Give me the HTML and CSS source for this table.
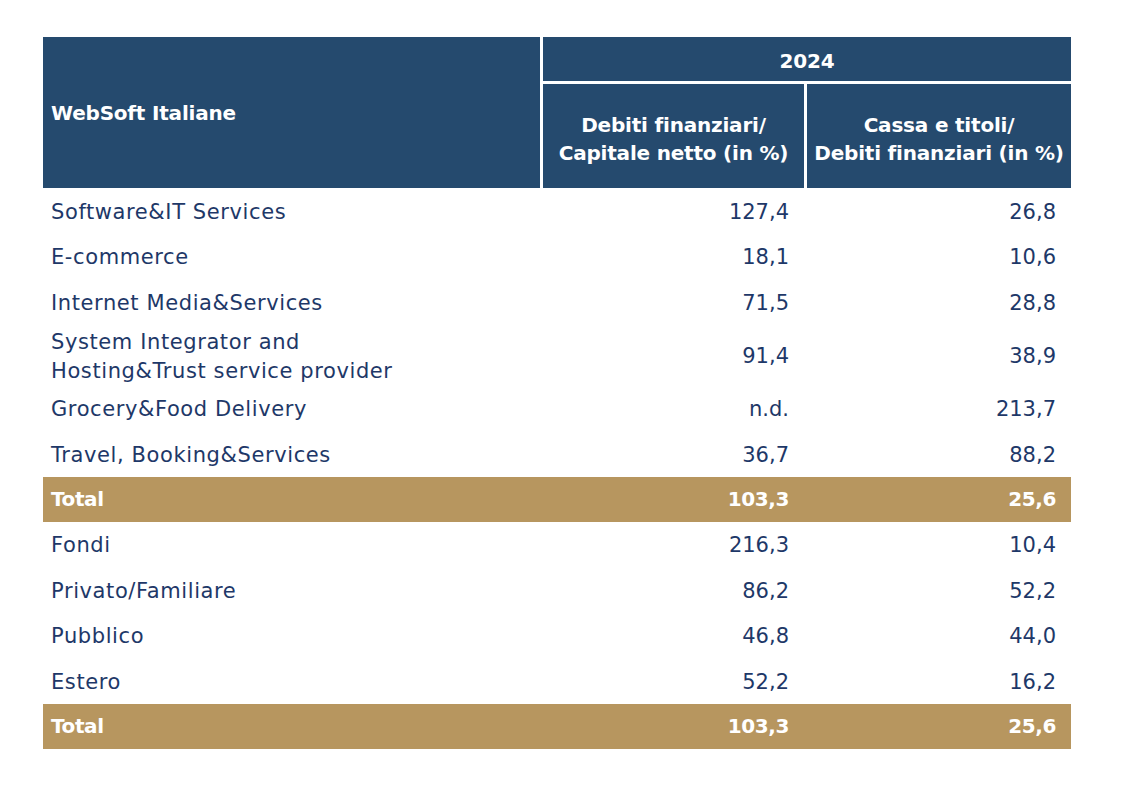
FILE: index.html
```html
<!DOCTYPE html>
<html lang="it">
<head>
<meta charset="utf-8">
<title>WebSoft Italiane</title>
<link rel="stylesheet" href="styles.css">
</head>
<body>
<table class="fin-table">
  <colgroup>
    <col class="c-name">
    <col class="c-val1">
    <col class="c-val2">
  </colgroup>
  <thead>
    <tr class="h-year">
      <th class="h-title" rowspan="2">WebSoft Italiane</th>
      <th class="h-group" colspan="2">2024</th>
    </tr>
    <tr class="h-sub">
      <th class="h-col">Debiti finanziari/<br>Capitale netto (in %)</th>
      <th class="h-col">Cassa e titoli/<br>Debiti finanziari (in %)</th>
    </tr>
  </thead>
  <tbody>
    <tr><td>Software&amp;IT Services</td><td class="num">127,4</td><td class="num">26,8</td></tr>
    <tr><td>E-commerce</td><td class="num">18,1</td><td class="num">10,6</td></tr>
    <tr><td>Internet Media&amp;Services</td><td class="num">71,5</td><td class="num">28,8</td></tr>
    <tr class="tall"><td>System Integrator and<br>Hosting&amp;Trust service provider</td><td class="num">91,4</td><td class="num">38,9</td></tr>
    <tr><td>Grocery&amp;Food Delivery</td><td class="num">n.d.</td><td class="num">213,7</td></tr>
    <tr><td>Travel, Booking&amp;Services</td><td class="num">36,7</td><td class="num">88,2</td></tr>
    <tr class="total"><td>Total</td><td class="num">103,3</td><td class="num">25,6</td></tr>
    <tr><td>Fondi</td><td class="num">216,3</td><td class="num">10,4</td></tr>
    <tr><td>Privato/Familiare</td><td class="num">86,2</td><td class="num">52,2</td></tr>
    <tr><td>Pubblico</td><td class="num">46,8</td><td class="num">44,0</td></tr>
    <tr><td>Estero</td><td class="num">52,2</td><td class="num">16,2</td></tr>
    <tr class="total"><td>Total</td><td class="num">103,3</td><td class="num">25,6</td></tr>
  </tbody>
</table>
</body>
</html>
```
FILE: styles.css
```css
html, body {
  margin: 0;
  padding: 0;
  background: #ffffff;
}

body {
  padding: 37px 0 0 43px;
  font-family: "DejaVu Sans", "Open Sans", sans-serif;
  color: #1e3868;
}

.fin-table {
  border-collapse: separate;
  border-spacing: 0;
  table-layout: fixed;
  width: 1028px;
}

.c-name { width: 497px; }
.c-val1 { width: 264px; }
.c-val2 { width: 267px; }

.fin-table th {
  background: #254a6e;
  color: #ffffff;
  font-weight: 700;
  font-size: 20px;
  padding: 0;
  letter-spacing: -0.2px;
}

.h-title {
  text-align: left;
  padding-left: 8px !important;
  vertical-align: middle;
}

.h-group {
  height: 41px;
  border-left: 3px solid #ffffff;
  border-bottom: 3px solid #ffffff;
  text-align: center;
  vertical-align: middle;
  padding-top: 3px !important;
}

.h-col {
  height: 104px;
  border-left: 3px solid #ffffff;
  text-align: center;
  vertical-align: middle;
  line-height: 28px;
  padding-top: 6px !important;
  box-sizing: border-box;
}

.fin-table td {
  height: 45.5px;
  padding: 3px 0 0 8px;
  font-size: 21px;
  line-height: 29px;
  letter-spacing: 0.6px;
  vertical-align: middle;
  box-sizing: border-box;
}

.fin-table td.num {
  text-align: right;
  padding: 3px 15px 0 0;
  letter-spacing: 0;
}

.fin-table tr.tall td {
  height: 61px;
}

.fin-table tr.total td {
  background: #b7965f;
  color: #ffffff;
  font-weight: 700;
  font-size: 20px;
  height: 45px;
  padding-top: 0;
  letter-spacing: -0.4px;
}
```
